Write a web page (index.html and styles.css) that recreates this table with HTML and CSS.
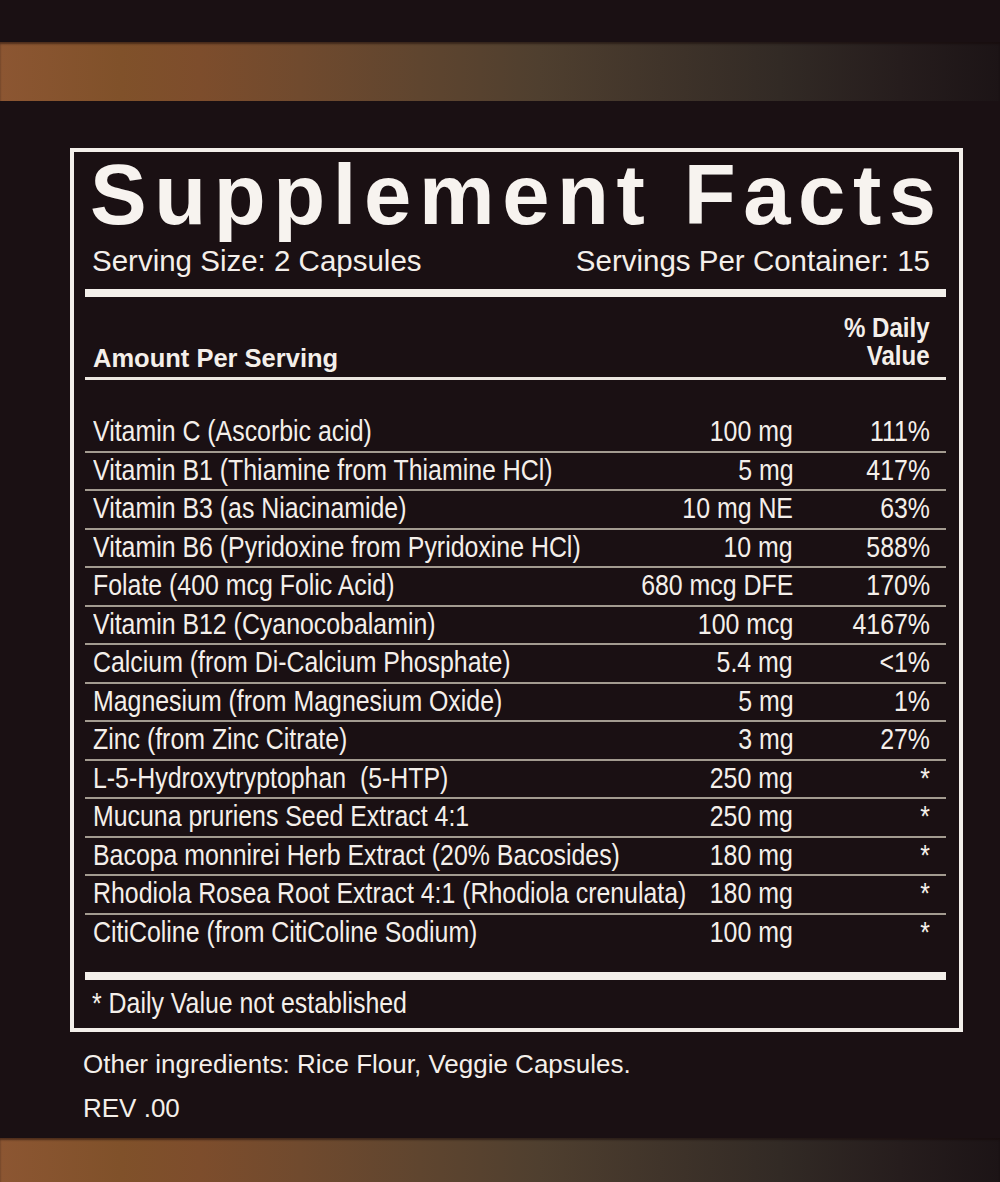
FILE: index.html
```html
<!DOCTYPE html>
<html lang="en">
<head>
<meta charset="utf-8">
<title>Supplement Facts</title>
<link rel="stylesheet" href="styles.css">
</head>
<body>
<div class="page">
  <div class="band band-top"></div>
  <section class="label">
    <h1 class="title">Supplement Facts</h1>
    <div class="serving">
      <span>Serving Size: 2 Capsules</span>
      <span>Servings Per Container: 15</span>
    </div>
    <div class="rule-thick"></div>
    <div class="head">
      <div class="head-left">Amount Per Serving</div>
      <div class="head-right">% Daily<br>Value</div>
    </div>
    <div class="rule-mid"></div>
    <div class="rows">
      <div class="row"><span class="name">Vitamin C (Ascorbic acid)</span><span class="amt">100 mg</span><span class="dv">111%</span></div>
      <div class="row"><span class="name">Vitamin B1 (Thiamine from Thiamine HCl)</span><span class="amt">5 mg</span><span class="dv">417%</span></div>
      <div class="row"><span class="name">Vitamin B3 (as Niacinamide)</span><span class="amt">10 mg NE</span><span class="dv">63%</span></div>
      <div class="row"><span class="name">Vitamin B6 (Pyridoxine from Pyridoxine HCl)</span><span class="amt">10 mg</span><span class="dv">588%</span></div>
      <div class="row"><span class="name">Folate (400 mcg Folic Acid)</span><span class="amt">680 mcg DFE</span><span class="dv">170%</span></div>
      <div class="row"><span class="name">Vitamin B12 (Cyanocobalamin)</span><span class="amt">100 mcg</span><span class="dv">4167%</span></div>
      <div class="row"><span class="name">Calcium (from Di-Calcium Phosphate)</span><span class="amt">5.4 mg</span><span class="dv">&lt;1%</span></div>
      <div class="row"><span class="name">Magnesium (from Magnesium Oxide)</span><span class="amt">5 mg</span><span class="dv">1%</span></div>
      <div class="row"><span class="name">Zinc (from Zinc Citrate)</span><span class="amt">3 mg</span><span class="dv">27%</span></div>
      <div class="row"><span class="name">L-5-Hydroxytryptophan&nbsp; (5-HTP)</span><span class="amt">250 mg</span><span class="dv">*</span></div>
      <div class="row"><span class="name">Mucuna pruriens Seed Extract 4:1</span><span class="amt">250 mg</span><span class="dv">*</span></div>
      <div class="row"><span class="name">Bacopa monnirei Herb Extract (20% Bacosides)</span><span class="amt">180 mg</span><span class="dv">*</span></div>
      <div class="row"><span class="name">Rhodiola Rosea Root Extract 4:1 (Rhodiola crenulata)</span><span class="amt">180 mg</span><span class="dv">*</span></div>
      <div class="row"><span class="name">CitiColine (from CitiColine Sodium)</span><span class="amt">100 mg</span><span class="dv">*</span></div>
    </div>
    <div class="rule-thick rule-bottom"></div>
    <p class="foot"><span class="cond">* Daily Value not established</span></p>
  </section>
  <div class="notes">
    <p>Other ingredients: Rice Flour, Veggie Capsules.</p>
    <p>REV .00</p>
  </div>
  <div class="band band-bottom"></div>
</div>
</body>
</html>
```

FILE: styles.css
```css
* { box-sizing: border-box; }

html, body {
  margin: 0;
  padding: 0;
  background: #1a1013;
}

.page {
  width: 1000px;
  height: 1182px;
  overflow: hidden;
  display: flex;
  flex-direction: column;
  padding-top: 42px;
  background: #1a1013;
  color: #f4efea;
  font-family: "Liberation Sans", Arial, Helvetica, sans-serif;
}

.band {
  flex: none;
  width: 100%;
  background: linear-gradient(90deg,
    #8c5632 0%, #80512a 12%, #7d4d2c 20%, #704a2e 30%,
    #5f452f 42%, #4f3f2f 54%, #40342a 66%, #322a25 78%,
    #261d1d 90%, #1c1416 100%);
}

.band-top {
  height: 59px;
  box-shadow: inset 0 2px 2px rgba(20, 8, 8, 0.5);
}

.band-bottom {
  height: 44px;
  margin-top: auto;
  box-shadow: inset 0 2px 2px rgba(20, 8, 8, 0.5);
}

.label {
  flex: none;
  width: 893px;
  margin: 47px 0 0 70px;
  border: 4px solid #f3efea;
  padding: 0 13px 0 11px;
}

.title {
  margin: 0;
  padding-left: 5px;
  font-weight: 700;
  font-size: 85px;
  line-height: 85px;
  letter-spacing: 7.6px;
  white-space: nowrap;
  color: #f7f3ef;
}

.serving {
  display: flex;
  justify-content: space-between;
  margin-top: 6.5px;
  padding: 0 16px 0 7px;
  font-size: 29.5px;
  line-height: 34px;
  white-space: nowrap;
}

.rule-thick {
  height: 8px;
  margin-top: 11.5px;
  background: #f3efea;
}

.head {
  display: flex;
  justify-content: space-between;
  align-items: flex-end;
  padding: 17.3px 16px 6.7px 8px;
  font-weight: 700;
}

.head-left {
  font-size: 25.5px;
  line-height: 28px;
  margin-bottom: -2px;
}

.head-right {
  font-size: 28px;
  line-height: 28px;
  text-align: right;
  transform: scaleX(0.86);
  transform-origin: right center;
}

.rule-mid {
  height: 3px;
  background: #ece7e1;
}

.rows {
  padding-top: 34.5px;
  font-size: 29px;
}

.row {
  display: flex;
  padding: 0 16px 2px 8px;
  line-height: 34.5px;
  border-bottom: 2px solid #a39b90;
  white-space: nowrap;
}

.row:last-child {
  border-bottom: none;
}

.name,
.amt,
.dv,
.cond {
  display: inline-block;
  transform: scaleX(0.858);
}

.name {
  flex: 1;
  min-width: 0;
  transform-origin: left center;
}

.amt {
  flex: none;
  text-align: right;
  transform-origin: right center;
}

.dv {
  flex: none;
  width: 137px;
  text-align: right;
  transform-origin: right center;
}

.rule-bottom {
  margin-top: 20.5px;
}

.foot {
  margin: 5.6px 0 0;
  padding: 0 0 8.4px 7px;
  font-size: 29px;
  line-height: 34px;
  white-space: nowrap;
}

.cond {
  transform-origin: left center;
}

.notes {
  flex: none;
  margin-top: 9.8px;
  padding-left: 83px;
  font-size: 26px;
  line-height: 44px;
}

.notes p {
  margin: 0;
}
```
